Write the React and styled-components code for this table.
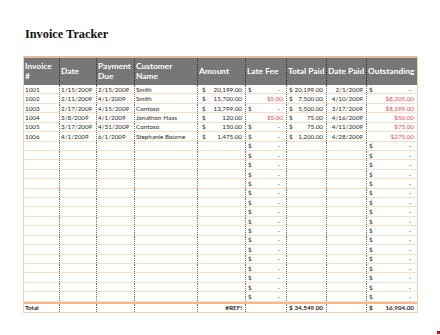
import React from "react";
import styled, { createGlobalStyle } from "styled-components";

const Global = createGlobalStyle`
  html, body { margin: 0; padding: 0; background: #fff; }
  body { width: 440px; height: 335px; overflow: hidden; position: relative; }
`;

const COLS = "36px 37px 38px 63px 48px 41px 40px 40px 50px";

const Page = styled.div`
  padding: 27px 0 0 24px;
  font-family: Lato, "Open Sans", sans-serif;
`;

const Title = styled.h1`
  margin: 0;
  font-family: "Liberation Serif", "Times New Roman", serif;
  font-weight: 700;
  font-size: 12.3px;
  line-height: 14px;
  color: #111;
  padding-left: 1px;
`;

const Table = styled.div`
  margin-top: 15px;
  width: 393px;
  border-left: 1px solid #f6cfb3;
  border-right: 1px solid #f6cfb3;
  box-sizing: content-box;
  margin-left: -1px;
`;

const HeaderRow = styled.div`
  display: grid;
  grid-template-columns: ${COLS};
  height: 29px;
  background: #777777;
  border-top: 2px solid #e4bd9c;
  box-sizing: border-box;
`;

const HeadCell = styled.div`
  display: flex;
  align-items: center;
  padding-left: 1px;
  color: #fff;
  font-weight: 700;
  font-size: 8.4px;
  line-height: 9.5px;
  border-right: ${(p) => (p.$last ? "none" : "1px dotted #2e2e2e")};
  box-sizing: border-box;
  white-space: nowrap;
  overflow: hidden;
`;

const Body = styled.div`
  display: grid;
  grid-auto-rows: calc(217px / 23);
`;

const Row = styled.div`
  display: grid;
  grid-template-columns: ${COLS};
  border-bottom: 1px solid #fbdcc7;
  box-sizing: border-box;
`;

const Cell = styled.div`
  display: flex;
  align-items: center;
  justify-content: ${(p) => (p.$right ? "flex-end" : "space-between")};
  padding: 0 ${(p) => (p.$dash ? "6px" : "3px")} 0 ${(p) => p.$pl || "1px"};
  font-size: 6.3px;
  font-weight: ${(p) => (p.$bold ? 700 : 400)};
  color: ${(p) => (p.$red ? "#f24a4d" : "#2a2a2a")};
  border-right: ${(p) => (p.$last ? "none" : "1px dotted #707070")};
  box-sizing: border-box;
  white-space: nowrap;
  overflow: hidden;
`;

const TotalRow = styled.div`
  display: grid;
  grid-template-columns: ${COLS};
  height: 11px;
  border-top: 2px solid #f6b887;
  border-bottom: 1px solid #f6cfb3;
  box-sizing: border-box;
`;

const RedDot = styled.div`
  position: absolute;
  left: 437px;
  top: 331px;
  width: 3px;
  height: 3px;
  background: #e60000;
`;

const headers = [
  ["Invoice", "#"],
  ["Date"],
  ["Payment", "Due"],
  ["Customer", "Name"],
  ["Amount"],
  ["Late Fee"],
  ["Total Paid"],
  ["Date Paid"],
  ["Outstanding"],
];

const data = [
  ["1001", "1/15/2009", "2/15/2009", "Smith", "20,199.00", null, "20,199.00", "2/1/2009", null],
  ["1002", "2/11/2009", "4/1/2009", "Smith", "15,700.00", "$5.00", "7,500.00", "4/10/2009", "$8,205.00"],
  ["1003", "2/17/2009", "4/15/2009", "Contoso", "13,799.00", null, "5,500.00", "3/17/2009", "$8,299.00"],
  ["1004", "3/8/2009", "4/1/2009", "Jonathon Haas", "120.00", "$5.00", "75.00", "4/16/2009", "$50.00"],
  ["1005", "3/17/2009", "4/31/2009", "Contoso", "150.00", null, "75.00", "4/11/2009", "$75.00"],
  ["1006", "4/1/2009", "6/1/2009", "Stephanie Bourne", "1,475.00", null, "1,200.00", "4/28/2009", "$275.00"],
];

function Money({ value, pl, last, bold }) {
  return (
    <Cell $pl={pl} $last={last} $bold={bold}>
      <span>$</span>
      <span>{value}</span>
    </Cell>
  );
}

function Dash({ last }) {
  return (
    <Cell $pl="2px" $dash $last={last}>
      <span>$</span>
      <span>-</span>
    </Cell>
  );
}

function Fee({ value, last }) {
  if (value == null) return <Dash last={last} />;
  return (
    <Cell $right $red $last={last}>
      {value}
    </Cell>
  );
}

function DataRow({ r }) {
  return (
    <Row>
      <Cell>{r[0]}</Cell>
      <Cell>{r[1]}</Cell>
      <Cell>{r[2]}</Cell>
      <Cell>{r[3]}</Cell>
      <Money value={r[4]} pl="4px" />
      <Fee value={r[5]} />
      <Money value={r[6]} pl="2px" />
      <Cell $right>{r[7]}</Cell>
      <Fee value={r[8]} last />
    </Row>
  );
}

function EmptyRow() {
  return (
    <Row>
      <Cell />
      <Cell />
      <Cell />
      <Cell />
      <Cell />
      <Dash />
      <Cell />
      <Cell />
      <Dash last />
    </Row>
  );
}

export default function App() {
  return (
    <>
      <Global />
      <Page>
        <Title>Invoice Tracker</Title>
        <Table>
          <HeaderRow>
            {headers.map((h, i) => (
              <HeadCell key={i} $last={i === headers.length - 1}>
                <div>
                  {h.map((line, j) => (
                    <div key={j}>{line}</div>
                  ))}
                </div>
              </HeadCell>
            ))}
          </HeaderRow>
          <Body>
            {data.map((r) => (
              <DataRow key={r[0]} r={r} />
            ))}
            {Array.from({ length: 17 }).map((_, i) => (
              <EmptyRow key={i} />
            ))}
          </Body>
          <TotalRow>
            <Cell $bold>Total</Cell>
            <Cell />
            <Cell />
            <Cell />
            <Cell $right $bold>#REF!</Cell>
            <Cell />
            <Money value="34,549.00" pl="2px" bold />
            <Cell />
            <Money value="16,904.00" pl="2px" bold last />
          </TotalRow>
        </Table>
      </Page>
      <RedDot />
    </>
  );
}
